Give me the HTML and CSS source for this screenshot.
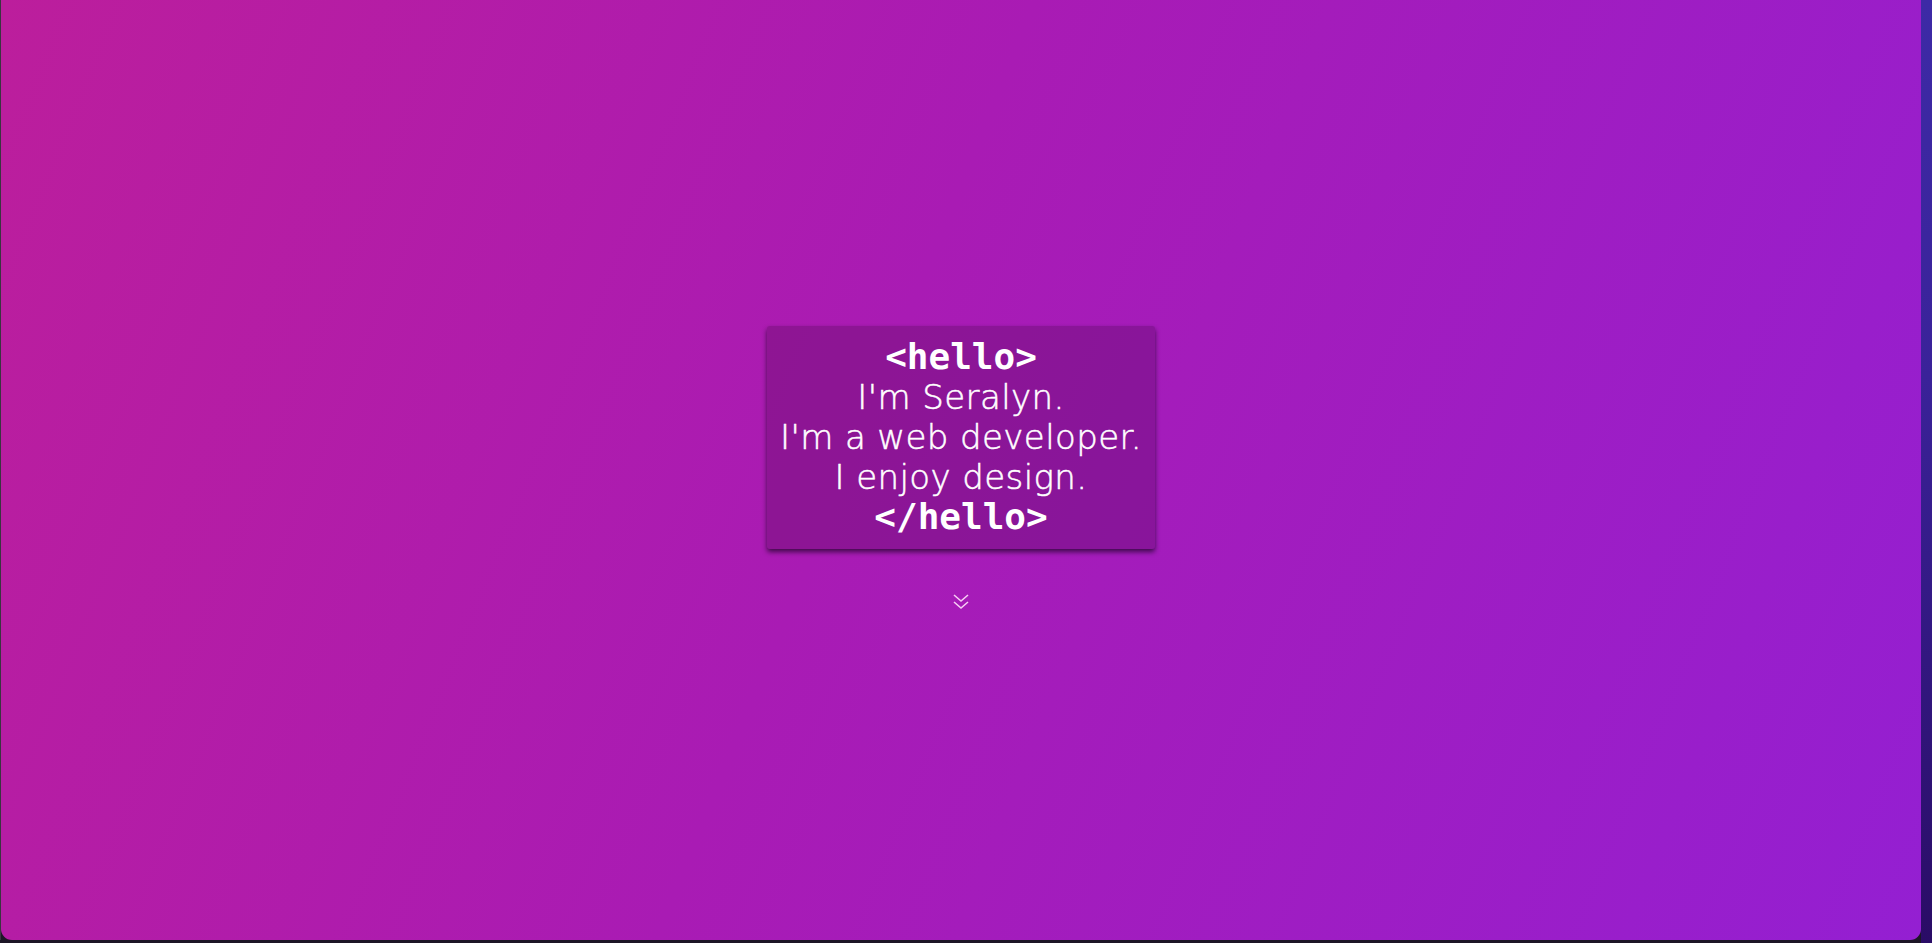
FILE: index.html
```html
<!DOCTYPE html>
<html>
<head>
<meta charset="utf-8">
<title>Seralyn</title>
<link rel="stylesheet" href="styles.css">
</head>
<body>
<div class="frame">
  <div class="edge-left"></div>
  <main class="hero">
    <div class="intro">
      <div class="card">
        <div class="tag">&lt;hello&gt;</div>
        <div class="line">I'm Seralyn.</div>
        <div class="line">I'm a web developer.</div>
        <div class="line">I enjoy design.</div>
        <div class="tag">&lt;/hello&gt;</div>
      </div>
      <svg class="chevrons" width="18" height="18" viewBox="0 0 18 18" aria-hidden="true">
        <path d="M2 2 L9 8 L16 2" fill="none" stroke="rgba(255,225,250,0.9)" stroke-width="1.6"/>
        <path d="M2 9 L9 15 L16 9" fill="none" stroke="rgba(255,225,250,0.9)" stroke-width="1.6"/>
      </svg>
    </div>
  </main>
  <div class="edge-right"></div>
</div>
</body>
</html>
```
FILE: styles.css
```css
html, body {
  margin: 0;
  padding: 0;
  height: 100%;
  overflow: hidden;
}
body {
  background: #1c1626;
}
.frame {
  display: flex;
  height: 943px;
}
.edge-left {
  width: 1px;
  background: #3a3540;
  height: 940px;
}
.hero {
  width: 1920px;
  height: 940px;
  border-radius: 0 0 11px 11px;
  background: linear-gradient(112deg, #bc1e9c 0%, #a91bb4 45%, #941fd2 100%);
  display: flex;
  align-items: center;
  justify-content: center;
}
.edge-right {
  flex: 1;
  background: linear-gradient(180deg, #3d2aa6 0%, #3a2299 40%, #2a0c66 100%);
}
.intro {
  display: flex;
  flex-direction: column;
  align-items: center;
  gap: 44px;
  margin-top: -4px;
}
.card {
  width: 388px;
  box-sizing: border-box;
  padding: 11px 0 12px;
  background: rgba(40, 0, 40, 0.22);
  border-radius: 3px;
  box-shadow: 0 3px 5px rgba(10, 0, 20, 0.65);
  text-align: center;
  color: #fff;
}
.tag {
  font-family: "DejaVu Sans Mono", monospace;
  font-weight: bold;
  font-size: 36px;
  line-height: 40px;
}
.line {
  font-family: "DejaVu Sans", sans-serif;
  font-weight: 200;
  font-size: 34px;
  letter-spacing: 0.4px;
  line-height: 40px;
  white-space: nowrap;
  -webkit-text-stroke: 0.5px #fff;
}
.chevrons {
  display: block;
}
```
